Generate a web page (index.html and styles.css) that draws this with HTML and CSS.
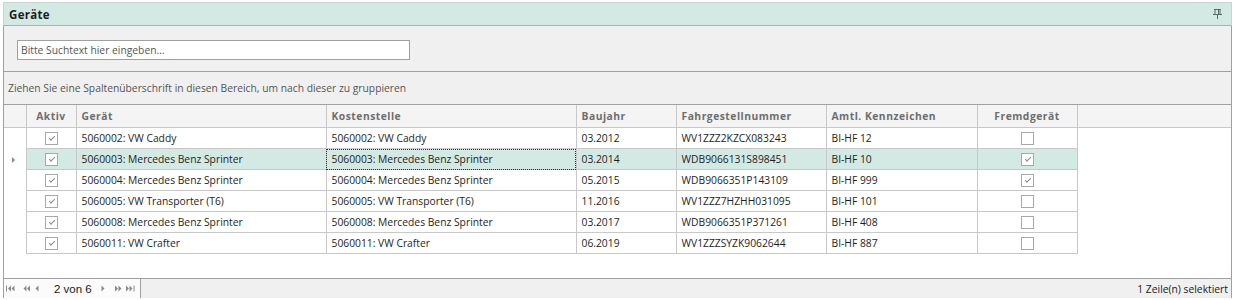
FILE: index.html
```html
<!DOCTYPE html>
<html lang="de">
<head>
<meta charset="utf-8">
<title>Geräte</title>
<link rel="stylesheet" href="styles.css">
</head>
<body>
<div class="panel">
  <div class="titlebar">
    <span class="title">Geräte</span>
    <svg class="pin" width="9" height="10" viewBox="0 0 9 10"><path d="M1 0.5H8M2 0.5V5M7 0.5V5M5.5 0.5V5M0 5.5H9M4.5 5.5V10" stroke="#5a6a66" stroke-width="1" fill="none"/></svg>
  </div>
  <div class="content">
    <div class="search-area">
      <div class="search">Bitte Suchtext hier eingeben…</div>
    </div>
    <div class="group-panel">Ziehen Sie eine Spaltenüberschrift in diesen Bereich, um nach dieser zu gruppieren</div>
    <div class="grid">
      <table class="table">
        <colgroup>
          <col class="c-ind"><col class="c-akt"><col class="c-ger"><col class="c-kst"><col class="c-bj"><col class="c-fgn"><col class="c-kz"><col class="c-fr"><col class="c-rest">
        </colgroup>
        <thead>
          <tr>
            <th class="ind"></th><th class="ctr">Aktiv</th><th>Gerät</th><th>Kostenstelle</th><th>Baujahr</th><th>Fahrgestellnummer</th><th>Amtl. Kennzeichen</th><th class="ctr">Fremdgerät</th><th class="rest"></th>
          </tr>
        </thead>
        <tbody>
          <tr><td class="ind"></td><td class="ctr"><span class="cb on"></span></td><td>5060002: VW Caddy</td><td>5060002: VW Caddy</td><td>03.2012</td><td>WV1ZZZ2KZCX083243</td><td>BI-HF 12</td><td class="ctr"><span class="cb"></span></td><td class="rest"></td></tr>
          <tr class="sel"><td class="ind"><span class="arrow"></span></td><td class="ctr"><span class="cb on"></span></td><td>5060003: Mercedes Benz Sprinter</td><td class="focus">5060003: Mercedes Benz Sprinter</td><td>03.2014</td><td>WDB9066131S898451</td><td>BI-HF 10</td><td class="ctr"><span class="cb on"></span></td><td class="rest"></td></tr>
          <tr><td class="ind"></td><td class="ctr"><span class="cb on"></span></td><td>5060004: Mercedes Benz Sprinter</td><td>5060004: Mercedes Benz Sprinter</td><td>05.2015</td><td>WDB9066351P143109</td><td>BI-HF 999</td><td class="ctr"><span class="cb on"></span></td><td class="rest"></td></tr>
          <tr><td class="ind"></td><td class="ctr"><span class="cb on"></span></td><td>5060005: VW Transporter (T6)</td><td>5060005: VW Transporter (T6)</td><td>11.2016</td><td>WV1ZZZ7HZHH031095</td><td>BI-HF 101</td><td class="ctr"><span class="cb"></span></td><td class="rest"></td></tr>
          <tr><td class="ind"></td><td class="ctr"><span class="cb on"></span></td><td>5060008: Mercedes Benz Sprinter</td><td>5060008: Mercedes Benz Sprinter</td><td>03.2017</td><td>WDB9066351P371261</td><td>BI-HF 408</td><td class="ctr"><span class="cb"></span></td><td class="rest"></td></tr>
          <tr><td class="ind"></td><td class="ctr"><span class="cb on"></span></td><td>5060011: VW Crafter</td><td>5060011: VW Crafter</td><td>06.2019</td><td>WV1ZZZSYZK9062644</td><td>BI-HF 887</td><td class="ctr"><span class="cb"></span></td><td class="rest"></td></tr>
        </tbody>
      </table>
    </div>
    <div class="footer">
      <div class="nav">
        <svg class="navbtn n1" width="9" height="7" viewBox="0 0 9 7"><path d="M0.5 0.5V6.5" stroke="#8a8a8a"/><path d="M5 0.5L2 3.5L5 6.5Z M8.5 0.5L5.5 3.5L8.5 6.5Z" fill="#8a8a8a"/></svg>
        <svg class="navbtn n2" width="7" height="7" viewBox="0 0 7 7"><path d="M3.5 0.5L0.5 3.5L3.5 6.5Z M7 0.5L4 3.5L7 6.5Z" fill="#8a8a8a"/></svg>
        <svg class="navbtn n3" width="4" height="7" viewBox="0 0 4 7"><path d="M3.5 0.5L0.5 3.5L3.5 6.5Z" fill="#8a8a8a"/></svg>
        <span class="pages">2 von 6</span>
        <svg class="navbtn n4" width="4" height="7" viewBox="0 0 4 7"><path d="M0.5 0.5L3.5 3.5L0.5 6.5Z" fill="#8a8a8a"/></svg>
        <svg class="navbtn n5" width="7" height="7" viewBox="0 0 7 7"><path d="M0 0.5L3 3.5L0 6.5Z M3.5 0.5L6.5 3.5L3.5 6.5Z" fill="#8a8a8a"/></svg>
        <svg class="navbtn n6" width="9" height="7" viewBox="0 0 9 7"><path d="M0 0.5L3 3.5L0 6.5Z M3.5 0.5L6.5 3.5L3.5 6.5Z" fill="#8a8a8a"/><path d="M8 0.5V6.5" stroke="#8a8a8a"/></svg>
      </div>
      <div class="status">1 Zeile(n) selektiert</div>
    </div>
  </div>
</div>
</body>
</html>
```
FILE: styles.css
```css
html, body {
  margin: 0;
  padding: 0;
  background: #ffffff;
}
body {
  font-family: "Open Sans", "Liberation Sans", Arial, sans-serif;
  font-size: 10.3px;
  color: #1e1e1e;
}
.panel {
  margin: 2px 0 0 3px;
  width: 1229px;
  height: 296px;
  display: flex;
  flex-direction: column;
}
.titlebar {
  height: 22px;
  flex: none;
  background: #d3e9e3;
  border: 1px solid #c9d3d0;
  border-bottom: 1px solid #a9b4b1;
  display: flex;
  align-items: center;
  justify-content: space-between;
  padding: 0 9px 0 5px;
}
.title {
  font-weight: bold;
  font-size: 11.5px;
  letter-spacing: 0.3px;
  color: #1e1e1e;
}
.pin {
  display: block;
}
.content {
  flex: 1;
  background: #f0f0f0;
  border-left: 1px solid #a0a0a0;
  border-right: 1px solid #a0a0a0;
  display: flex;
  flex-direction: column;
}
.search-area {
  height: 46px;
  flex: none;
  border-bottom: 1px solid #a0a0a0;
  padding: 14px 0 0 13px;
  box-sizing: border-box;
}
.search {
  width: 388px;
  height: 18px;
  background: #ffffff;
  border: 1px solid #a0a0a0;
  color: #555555;
  line-height: 18px;
  padding-left: 3px;
}
.group-panel {
  height: 33px;
  flex: none;
  border-bottom: 1px solid #a0a0a0;
  color: #555555;
  padding-left: 4px;
  line-height: 33px;
  box-sizing: border-box;
}
.grid {
  flex: 1;
  background: #ffffff;
  border-bottom: 1px solid #a0a0a0;
  overflow: hidden;
}
.table {
  border-collapse: collapse;
  table-layout: fixed;
  width: 1227px;
}
.c-ind { width: 22px; }
.c-akt { width: 50px; }
.c-ger { width: 250px; }
.c-kst { width: 250px; }
.c-bj { width: 100px; }
.c-fgn { width: 150px; }
.c-kz { width: 151px; }
.c-fr { width: 100px; }
.c-rest { width: auto; }
th {
  height: 22px;
  background: #f4f4f4;
  color: #6e6e6e;
  font-weight: bold;
  letter-spacing: 0.5px;
  text-align: left;
  padding: 0 5px;
  border-right: 1px solid #c8c8c8;
  border-bottom: 1px solid #c8c8c8;
  white-space: nowrap;
}
th.rest {
  border-right: none;
}
td {
  height: 20px;
  padding: 0 5px;
  border-right: 1px solid #c8c8c8;
  border-bottom: 1px solid #c8c8c8;
  white-space: nowrap;
  overflow: hidden;
}
td.ind {
  background: #ffffff;
  border-bottom: none;
  padding: 0 2px 0 0;
  text-align: center;
}
td.rest {
  border: none;
  background: #ffffff;
}
.ctr {
  text-align: center;
}
tr.sel td {
  background: #d3e9e3;
}
tr.sel td.ind,
tr.sel td.rest {
  background: #ffffff;
}
td.focus {
  outline: 1px dotted #333333;
  outline-offset: -1px;
}
.arrow {
  display: inline-block;
  width: 0;
  height: 0;
  border-top: 3px solid transparent;
  border-bottom: 3px solid transparent;
  border-left: 3px solid #8a8a8a;
  vertical-align: middle;
}
.cb {
  display: inline-block;
  width: 11px;
  height: 11px;
  border: 1px solid #a8a8a8;
  background: #ffffff;
  vertical-align: middle;
  position: relative;
}
.cb.on::after {
  content: "";
  position: absolute;
  left: 3px;
  top: 3px;
  width: 5px;
  height: 2px;
  border-left: 1px solid #8a8a8a;
  border-bottom: 1px solid #8a8a8a;
  transform: rotate(-45deg);
}
.footer {
  height: 19px;
  flex: none;
  display: flex;
  align-items: stretch;
  justify-content: space-between;
}
.nav {
  width: 137px;
  display: flex;
  align-items: center;
  background: #fbfbfb;
  border-right: 1px solid #a0a0a0;
  box-sizing: border-box;
}
.navbtn {
  display: block;
}
.n1 { margin-left: 2px; }
.n2 { margin-left: 8px; }
.n3 { margin-left: 5px; }
.pages {
  font-family: "Liberation Sans", Arial, sans-serif;
  font-size: 11.5px;
  color: #202020;
  margin-left: 15px;
}
.n4 { margin-left: 9px; }
.n5 { margin-left: 10px; }
.n6 { margin-left: 4px; }
.status {
  align-self: center;
  padding-right: 3px;
  color: #202020;
}
```
